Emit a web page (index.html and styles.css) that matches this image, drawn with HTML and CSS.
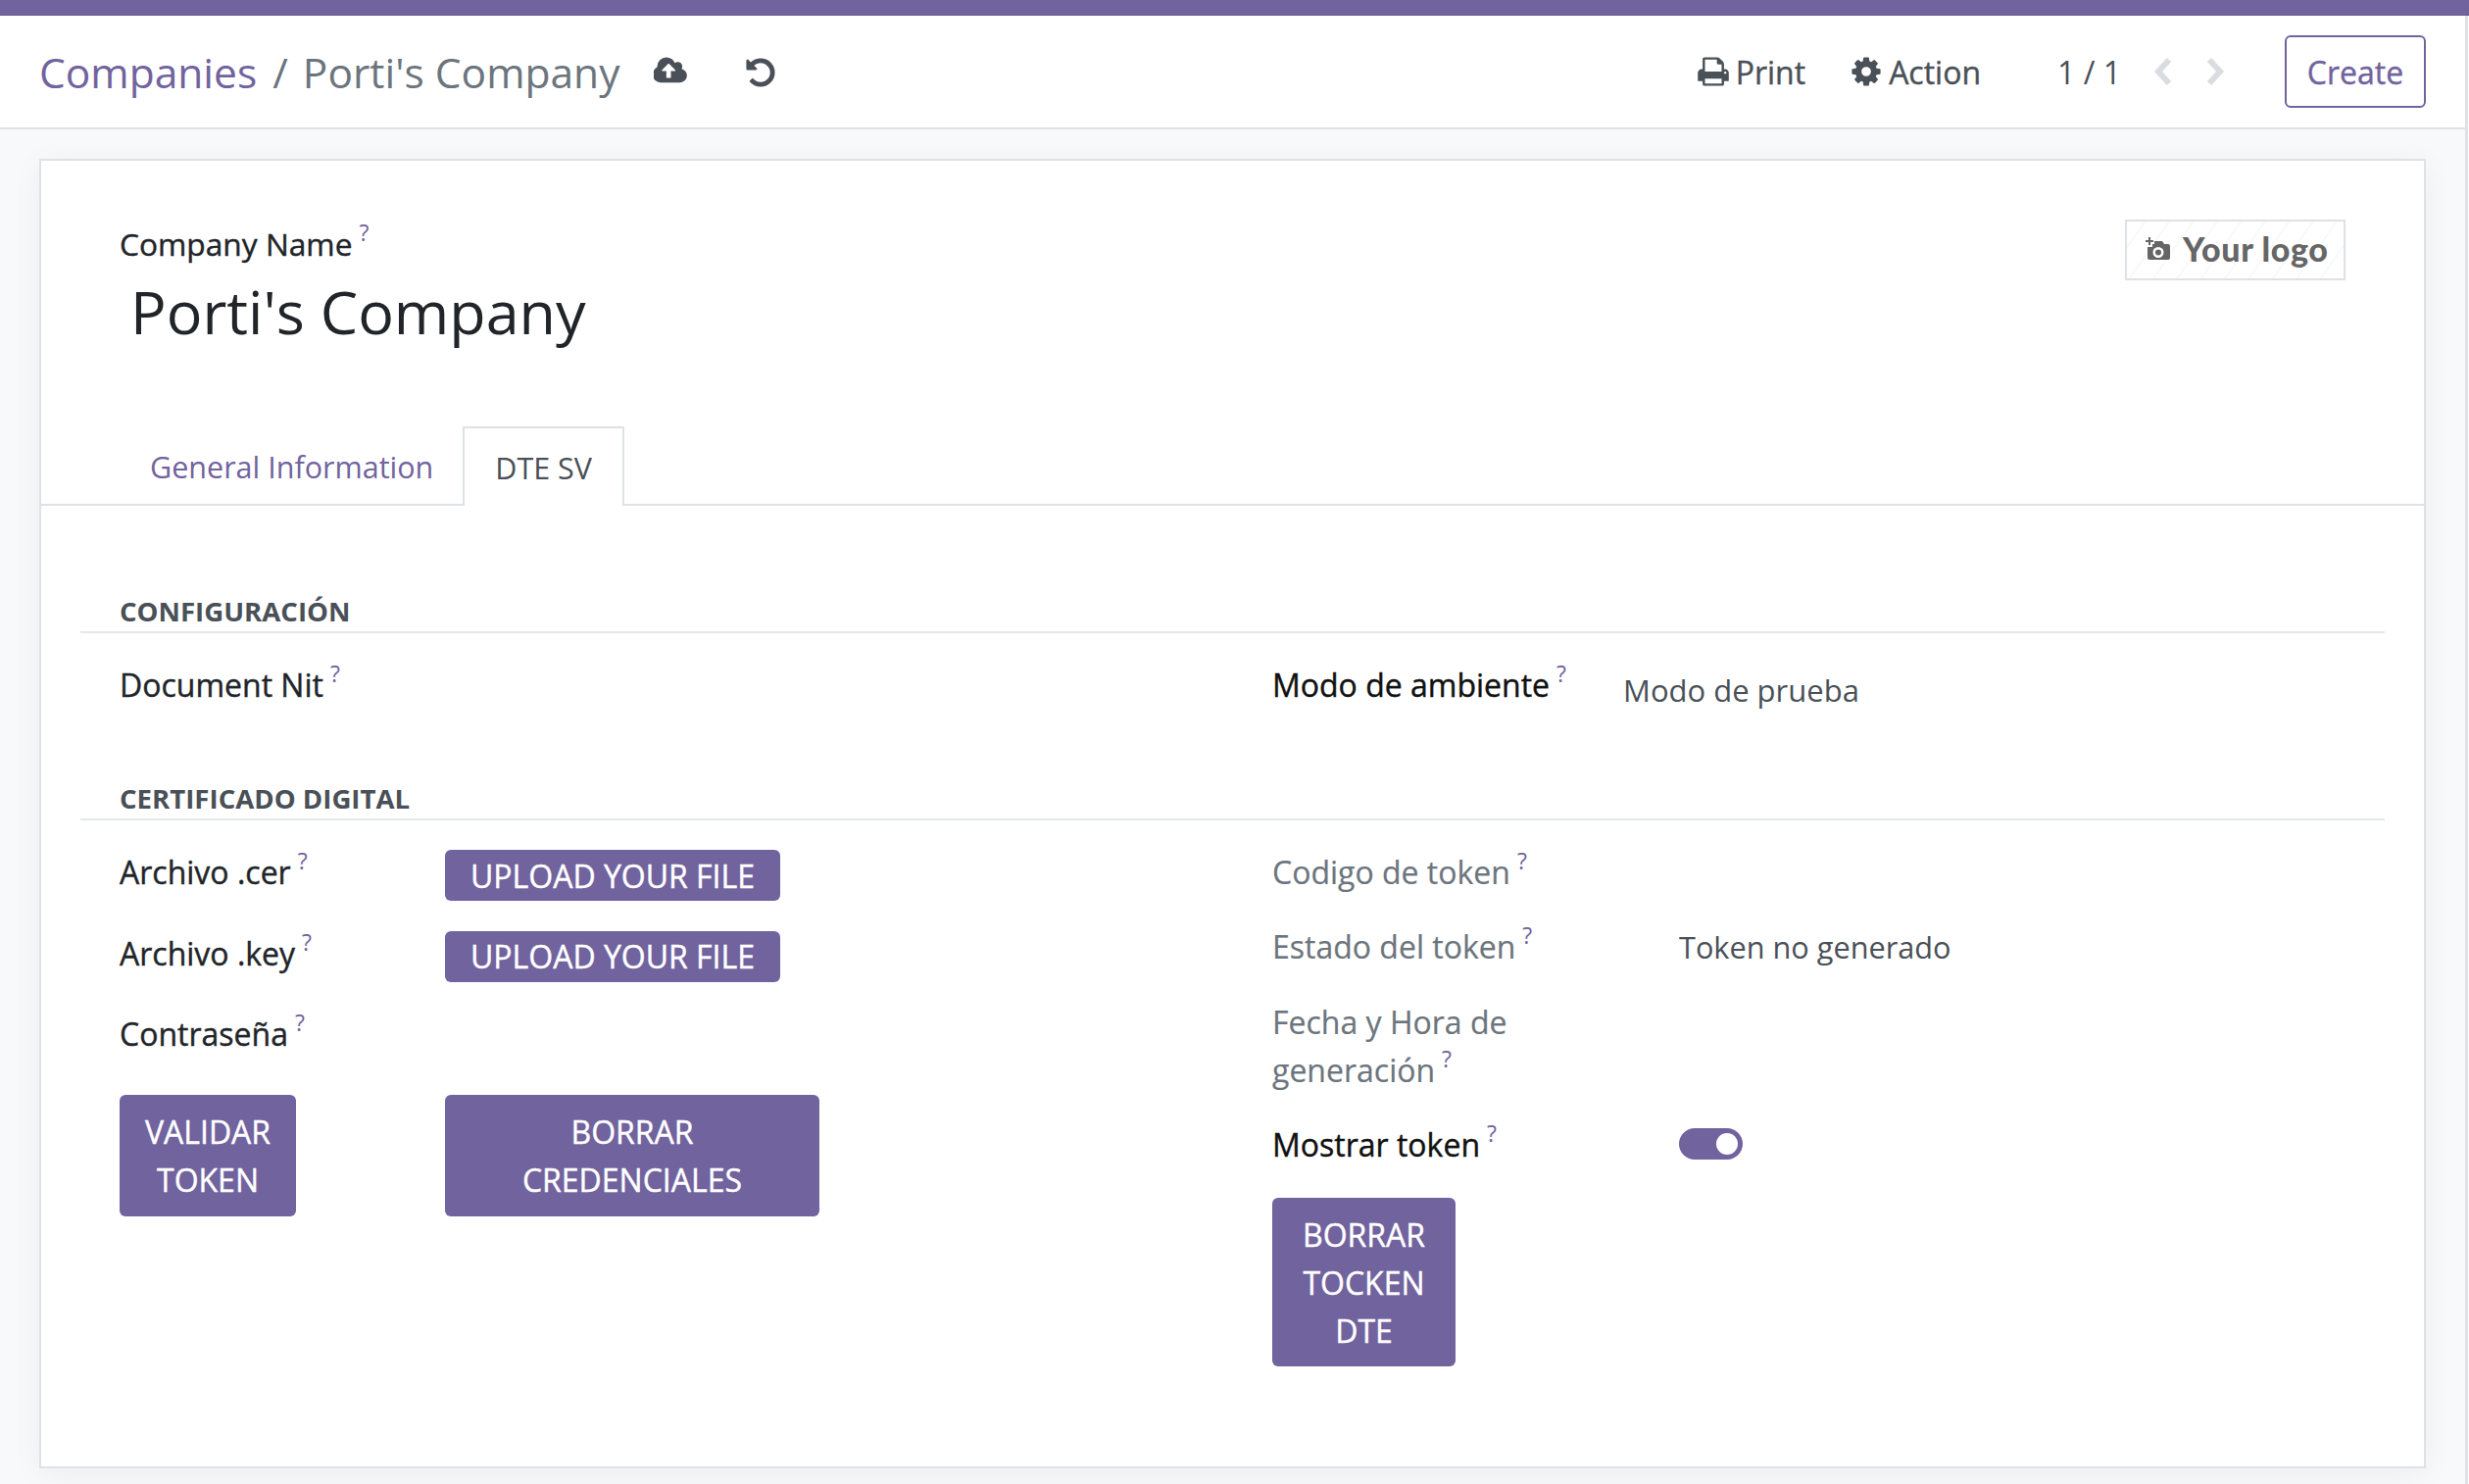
FILE: index.html
```html
<!DOCTYPE html>
<html lang="en">
<head>
    <meta charset="UTF-8">
    <title>Porti's Company - Odoo</title>
    <link rel="stylesheet" href="styles.css">
</head>
<body>

    <div class="topbar"></div>

    <div class="main">
    <div class="control-panel">
        <div class="breadcrumb">
            <a class="crumb-link">Companies</a>
            <span class="crumb-sep">/</span>
            <span class="crumb-current">Porti's Company</span>
            <svg class="icon icon-cloud" viewBox="0 0 1920 1792"><path d="M1216 864q0-14-9-23l-352-352q-9-9-23-9t-23 9l-351 351q-10 12-10 24 0 14 9 23t23 9h224v352q0 13 9.500 22.500t22.500 9.500h192q13 0 22.500-9.500t9.500-22.500v-352h224q13 0 22.500-9.500t9.500-22.500zm640 288q0 159-112.500 271.500t-271.500 112.500h-1088q-185 0-316.500-131.500t-131.500-316.500q0-130 70-240t188-165q-2-30-2-43 0-212 150-362t362-150q156 0 285.500 87t188.500 231q71-62 166-62 106 0 181 75t75 181q0 76-41 138 130 31 213.500 135.500t83.500 238.500z"/></svg>
            <svg class="icon icon-undo" viewBox="0 0 1792 1792"><path d="M1664 896q0 156-61 298t-164 245-245 164-298 61q-172 0-327-72.500t-264-204.500q-7-10-6.500-22.500t8.500-20.500l137-138q10-9 25-9 16 2 23 12 73 95 179 147t225 52q104 0 198.500-40.500t163.500-109.500 109.500-163.500 40.500-198.500-40.500-198.500-109.500-163.500-163.500-109.500-198.500-40.500q-98 0-188 35.500t-160 101.500l137 138q31 30 14 69-17 40-59 40h-448q-26 0-45-19t-19-45v-448q0-42 40-59 39-17 69 14l130 129q107-101 244.500-156.500t284.500-55.500q156 0 298 61t245 164 164 245 61 298z"/></svg>
        </div>
        <div class="panel-actions">
            <div class="panel-item print-item">
                <svg class="icon icon-print" viewBox="0 0 1792 1792"><path d="M448 1536h896v-256h-896v256zm0-640h896v-384h-160q-40 0-68-28t-28-68v-160h-640v640zm1152 64q0-26-19-45t-45-19-45 19-19 45 19 45 45 19 45-19 19-45zm128 0v416q0 13-9.500 22.500t-22.500 9.500h-224v160q0 40-28 68t-68 28h-960q-40 0-68-28t-28-68v-160h-224q-13 0-22.500-9.500t-9.500-22.500v-416q0-79 56.500-135.500t135.500-56.500h64v-544q0-40 28-68t68-28h672q40 0 88 20t76 48l152 152q28 28 48 76t20 88v256h64q79 0 135.500 56.500t56.500 135.500z"/></svg>
                Print
            </div>
            <div class="panel-item action-item">
                <svg class="icon" viewBox="0 0 1792 1792"><path d="M1152 896q0-106-75-181t-181-75-181 75-75 181 75 181 181 75 181-75 75-181zm512-109v222q0 12-8 23t-20 13l-185 28q-19 54-39 91 35 50 107 138 10 12 10 25t-9 23q-27 37-99 108t-94 71q-12 0-26-9l-138-108q-44 23-91 38-16 136-29 186-7 28-36 28h-222q-14 0-24.500-8.500t-11.500-21.500l-28-184q-49-16-90-37l-141 107q-10 9-25 9-14 0-25-11-126-114-165-168-7-10-7-23 0-12 8-23 15-21 51-66.500t54-70.500q-27-50-41-99l-183-27q-13-2-21-12.500t-8-23.500v-222q0-12 8-23t19-13l186-28q14-46 39-92-40-57-107-138-10-12-10-24 0-10 9-23 26-36 98.500-107.500t94.500-71.500q13 0 26 10l138 107q44-23 91-38 16-136 29-186 7-28 36-28h222q14 0 24.500 8.500t11.500 21.500l28 184q49 16 90 37l142-107q9-9 24-9 13 0 25 10 129 119 165 170 7 8 7 22 0 12-8 23-15 21-51 66.500t-54 70.500q26 50 41 98l183 28q13 2 21 12.500t8 23.500z"/></svg>
                Action
            </div>
            <div class="pager">1 / 1</div>
            <svg class="chevron" viewBox="0 0 20 30"><polyline points="16,3 5,15 16,27"/></svg>
            <svg class="chevron chevron-next" viewBox="0 0 20 30"><polyline points="4,3 15,15 4,27"/></svg>
            <button class="btn-create">Create</button>
        </div>
    </div>

    <div class="content">
        <div class="sheet">
            <div class="sheet-head">
                <div>
                    <div class="name-label">Company Name<sup>?</sup></div>
                    <div class="name-title">Porti's Company</div>
                </div>
                <div class="logo-box">
                    <svg class="logo-cam" viewBox="0 0 28 26"><path d="M5 1h2v3h3v2H7v3H5V6H2V4h3z"/><path fill-rule="evenodd" d="M11 5h8l2 3h4a2 2 0 0 1 2 2v12a2 2 0 0 1-2 2H6a2 2 0 0 1-2-2V11h5V8h2zm4 6a5.500 5.500 0 1 0 0 11 5.500 5.500 0 0 0 0-11zm0 2.500a3 3 0 1 1 0 6 3 3 0 0 1 0-6z"/></svg>
                    Your logo
                </div>
            </div>

            <div class="tabs">
                <a class="tab">General Information</a>
                <a class="tab active">DTE SV</a>
            </div>

            <div class="tab-body">
                <div class="section-title">CONFIGURACIÓN</div>
                <div class="group group-config">
                    <div class="label">Document Nit<sup>?</sup></div>
                    <div class="ambiente">
                        <div class="label label-medium">Modo de ambiente<sup>?</sup></div>
                        <div class="value">Modo de prueba</div>
                    </div>
                </div>

                <div class="section-title">CERTIFICADO DIGITAL</div>
                <div class="group group-cert">
                    <div class="form-col">
                        <div class="form-row">
                            <div class="label">Archivo .cer<sup>?</sup></div>
                            <button class="btn">UPLOAD YOUR FILE</button>
                        </div>
                        <div class="form-row">
                            <div class="label">Archivo .key<sup>?</sup></div>
                            <button class="btn">UPLOAD YOUR FILE</button>
                        </div>
                        <div class="form-row">
                            <div class="label">Contraseña<sup>?</sup></div>
                        </div>
                        <div class="form-row form-row-btns">
                            <button class="btn btn-validar">VALIDAR<br>TOKEN</button>
                            <button class="btn btn-borrar">BORRAR<br>CREDENCIALES</button>
                        </div>
                    </div>
                    <div class="form-col token-col">
                        <div class="token-row">
                            <div class="label muted">Codigo de token<sup>?</sup></div>
                        </div>
                        <div class="token-row">
                            <div class="label muted">Estado del token<sup>?</sup></div>
                            <div class="value value-token">Token no generado</div>
                        </div>
                        <div class="token-row">
                            <div class="label muted">Fecha y Hora de<br>generación<sup>?</sup></div>
                        </div>
                        <div class="token-row">
                            <div class="label label-medium">Mostrar token<sup>?</sup></div>
                            <div class="toggle"><span class="knob"></span></div>
                        </div>
                        <button class="btn btn-tocken">BORRAR<br>TOCKEN<br>DTE</button>
                    </div>
                </div>
            </div>
        </div>
    </div>
    </div>

</body>
</html>
```

FILE: styles.css
```css
/* General */
* {
    margin: 0;
    padding: 0;
    box-sizing: border-box;
}
html, body {
    width: 100%;
    height: 100%;
    overflow: hidden;
    font-family: "Open Sans", "Noto Sans", sans-serif;
    font-size: 32px;
    line-height: 49px;
    color: #212529;
    background: #fff;
}
.icon {
    fill: #495057;
}

/* Top bar */
.topbar {
    height: 16px;
    background: #71639e;
    border-bottom: 1px solid #63578f;
}
.main {
    width: 2518px;
    height: 1498px;
    background: #f8f9fa;
    border-right: 3px solid #dee2e6;
}

/* Control panel */
.control-panel {
    height: 116px;
    padding: 20px 40px 0 40px;
    display: flex;
    justify-content: space-between;
    background: #fff;
    border-bottom: 2px solid #dee2e6;
}
.breadcrumb {
    display: flex;
    align-items: center;
    height: 74px;
    font-size: 42.5px;
    color: #6c757d;
}
.crumb-link {
    color: #71639e;
}
.crumb-sep {
    margin: 0 15px 0 16px;
}
.icon-cloud {
    width: 35px;
    height: 33px;
    margin: -1px 0 0 35px;
}
.icon-undo {
    width: 34px;
    height: 34px;
    margin: 1px 0 0 57px;
}
.panel-actions {
    display: flex;
    align-items: center;
    height: 74px;
    color: #495057;
    -webkit-text-stroke: 0.4px currentColor;
}
.panel-item {
    display: flex;
    align-items: center;
    gap: 6px;
}
.panel-item .icon {
    width: 34px;
    height: 34px;
}
.print-item {
    margin-right: 45px;
}
.pager {
    margin-left: 78px;
    margin-right: 33px;
    -webkit-text-stroke: 0;
}
.chevron {
    width: 20px;
    height: 30px;
    fill: none;
    stroke: #d9dde1;
    stroke-width: 6;
}
.chevron-next {
    margin-left: 33px;
}
.btn-create {
    margin-left: 61px;
    width: 144px;
    height: 74px;
    font: inherit;
    color: #71639e;
    background: #fff;
    border: 2px solid #71639e;
    border-radius: 6px;
    -webkit-text-stroke: 0.4px currentColor;
}

/* Sheet */
.content {
    padding: 30px 40px 0 40px;
}
.sheet {
    height: 1336px;
    background: #fff;
    border: 2px solid #dee2e6;
    box-shadow: 0 6px 30px rgba(0, 0, 0, 0.05);
}
.sheet-head {
    display: flex;
    justify-content: space-between;
    padding: 60px 80px 0;
    height: 271px;
}
sup {
    font-size: 23px;
    line-height: 0;
    color: #71639e;
    margin-left: 7px;
    vertical-align: 15px;
    -webkit-text-stroke: 0;
}
.name-label {
    font-size: 31.7px;
    -webkit-text-stroke: 0.4px currentColor;
}
.name-title {
    margin: 7px 0 0 11px;
    font-size: 61px;
    line-height: 76px;
}
.logo-box {
    display: flex;
    align-items: center;
    gap: 12px;
    width: 225px;
    height: 62px;
    padding: 0 0 3px 17px;
    font-family: Lato, "Open Sans", sans-serif;
    font-size: 34px;
    font-weight: 900;
    letter-spacing: 0.6px;
    color: #666;
    border: 2px solid #dee2e6;
    background: repeating-linear-gradient(-55deg, #fff, #fff 18px, #f8f9fa 18px, #f8f9fa 20px);
}
.logo-cam {
    width: 28px;
    height: 26px;
    fill: #666;
}

/* Tabs */
.tabs {
    display: flex;
    height: 81px;
    padding-left: 81px;
    border-bottom: 2px solid #dee2e6;
    font-size: 30.5px;
}
.tab {
    padding: 17px 30px 0;
    color: #71639e;
}
.tab.active {
    height: 81px;
    padding: 16px 31px 0;
    color: #495057;
    background: #fff;
    border: 2px solid #dee2e6;
    border-bottom: none;
}

/* Groups */
.tab-body {
    padding: 88px 40px 0;
}
.section-title {
    padding-left: 40px;
    font-size: 27.6px;
    line-height: 38px;
    font-weight: 700;
    color: #495057;
    border-bottom: 2px solid #e5e7ea;
    height: 42px;
}
.group {
    display: grid;
    grid-template-columns: 1176px 1fr;
    padding-left: 40px;
}
.group-config {
    height: 149px;
    padding-top: 28px;
}
.group-cert {
    padding-top: 28px;
}
.label {
    color: #212529;
    -webkit-text-stroke: 0.4px currentColor;
}
.label-medium {
    color: #111;
}
.muted {
    color: #6c757d;
    -webkit-text-stroke: 0.2px currentColor;
}
.value {
    color: #495057;
    font-size: 31px;
}
.ambiente {
    display: flex;
    gap: 58px;
}
.ambiente .value {
    margin-top: 6px;
}
.value-token {
    font-size: 30.7px;
    margin-top: 1px;
}

/* Certificate forms */
.form-row {
    display: grid;
    grid-template-columns: 332px auto;
    justify-content: start;
    align-items: start;
    height: 82.5px;
}
.form-row-btns {
    height: auto;
    margin-top: 4.5px;
}
.btn {
    font: inherit;
    color: #fff;
    background: #71639e;
    border: none;
    border-radius: 6px;
    margin-top: 2px;
    height: 52px;
    width: 342px;
    -webkit-text-stroke: 0.4px currentColor;
}
.btn-validar {
    width: 180px;
    height: 124px;
    margin-top: 0;
}
.btn-borrar {
    width: 382px;
    height: 124px;
    margin-top: 0;
}
.token-row {
    display: grid;
    grid-template-columns: 415px auto;
    align-items: start;
    margin-bottom: 27px;
}
.toggle {
    width: 65px;
    height: 32px;
    margin-top: 8px;
    padding: 5px;
    display: flex;
    justify-content: flex-end;
    background: #71639e;
    border-radius: 16px;
}
.knob {
    width: 22px;
    height: 22px;
    background: #fff;
    border-radius: 50%;
}
.btn-tocken {
    width: 187px;
    height: 172px;
    margin-top: 3px;
}
```
